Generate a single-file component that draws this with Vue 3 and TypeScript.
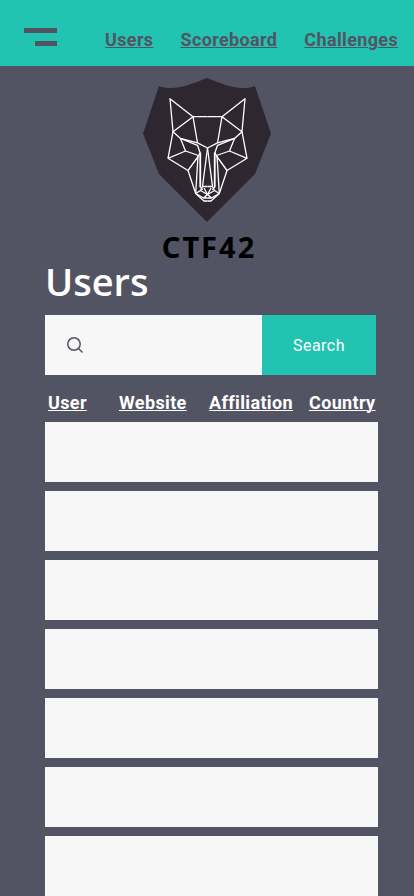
<script setup lang="ts">
interface NavLink {
  label: string
  href: string
}

const navLinks: NavLink[] = [
  { label: 'Users', href: '#users' },
  { label: 'Scoreboard', href: '#scoreboard' },
  { label: 'Challenges', href: '#challenges' },
]

const columns: string[] = ['User', 'Website', 'Affiliation', 'Country']
const rowCount = 7
</script>

<template>
  <div class="page">
    <header class="topbar">
      <button class="menu" type="button" aria-label="Menu">
        <span class="bar bar-long"></span>
        <span class="bar bar-short"></span>
      </button>
      <nav class="nav">
        <a v-for="link in navLinks" :key="link.label" :href="link.href">{{ link.label }}</a>
      </nav>
    </header>

    <div class="brand">
      <svg class="shield" viewBox="143 78 128 144" aria-hidden="true">
        <path
          class="plate"
          d="M207 78C195 83 181 88 171 88Q163 88 159 86L143 133.500L159 174L207 222L255 174L271 133.500L255 86Q251 88 243 88C233 88 219 83 207 78Z"
        />
        <g id="half" class="lines">
          <path class="shade" d="M199 155L200.500 154V188L199 187Z" />
          <path d="M207.500 116.700H193L170 98.700L173 131.700L193 116.700L197.500 143" />
          <path d="M173 131.700L168 158.300L188 170.500L198.500 156" />
          <path d="M173 131.700L180.500 138.500L197.500 142.800L207.500 148" />
          <path d="M180.500 138.500L185.500 151L168 158.300M185.500 151L198.500 155.500" />
          <path d="M180.500 138.500L197.500 145.300L200 152.500L198.500 156" />
          <path d="M188 170.500L195.700 193.500L204 201H207.500" />
          <path d="M198 156L195.700 193.500M200.500 152.500V187L202.500 190" />
          <path d="M207.500 148L202.500 186.500H207.500M202.500 186.500L200.500 190.500L207.500 194.500L204 188" />
          <path d="M195.700 193.500L200.500 190.500M207.500 194.500L203.500 198L195.700 193.500M203.500 198H207.500" />
        </g>
        <use href="#half" transform="matrix(-1 0 0 1 415 0)" />
      </svg>
      <p class="name">CTF42</p>
    </div>

    <main class="content">
      <h1>Users</h1>
      <form class="search" @submit.prevent>
        <label class="field">
          <svg class="glass" viewBox="0 0 18 18" aria-hidden="true">
            <circle cx="8" cy="8" r="6.200" />
            <path d="M12.500 12.500L16.500 16.500" />
          </svg>
          <input type="search" aria-label="Search users" />
        </label>
        <button type="submit">Search</button>
      </form>

      <table>
        <thead>
          <tr>
            <th v-for="column in columns" :key="column" scope="col">
              <a href="#users">{{ column }}</a>
            </th>
          </tr>
        </thead>
        <tbody>
          <tr v-for="row in rowCount" :key="row">
            <td v-for="column in columns" :key="column"></td>
          </tr>
        </tbody>
      </table>
    </main>
  </div>
</template>

<style>
body {
  background: #535463;
}
</style>

<style scoped>
.page {
  font-family: Roboto, 'Liberation Sans', sans-serif;
  background: #535463;
  color: #fff;
}

.topbar {
  display: flex;
  align-items: flex-end;
  justify-content: space-between;
  box-sizing: border-box;
  height: 66px;
  padding: 0 16px 16px 24px;
  background: #22c3b1;
}

.menu {
  display: flex;
  flex-direction: column;
  align-items: flex-end;
  gap: 8px;
  margin-bottom: 4px;
  padding: 0;
  border: 0;
  background: none;
}

.bar {
  height: 5px;
  background: #535463;
}

.bar-long {
  width: 33px;
}

.bar-short {
  width: 22px;
}

.nav {
  display: flex;
  gap: 27px;
}

.nav a,
th a {
  font-size: 18px;
  font-weight: 700;
  letter-spacing: 0.02em;
  text-decoration: underline;
  text-decoration-thickness: 1px;
}

.nav a {
  color: #535463;
  line-height: 20px;
}

.brand {
  display: flex;
  flex-direction: column;
  align-items: center;
  padding-top: 12px;
}

.shield {
  width: 128px;
  height: 144px;
}

.plate {
  fill: #2f2730;
}

.lines {
  fill: none;
  stroke: #fff;
  stroke-width: 1.300;
  stroke-linejoin: round;
}

.shade {
  fill: #a9a6aa;
  stroke: none;
}

.name {
  margin: 8px 0 0;
  padding-left: 4px;
  color: #000;
  font: 700 29px/34px 'Noto Sans', sans-serif;
  letter-spacing: 2px;
}

.content {
  padding: 0 36px 0 45px;
}

h1 {
  margin: 0;
  font: 600 38px/34px 'Open Sans', 'Noto Sans', sans-serif;
}

.search {
  display: flex;
  height: 60px;
  margin: 17px 2px 0 0;
}

.field {
  display: flex;
  flex: 1;
  align-items: center;
  gap: 10px;
  min-width: 0;
  padding: 0 21px;
  background: #f7f7f7;
}

.glass {
  flex: none;
  width: 18px;
  height: 18px;
  fill: none;
  stroke: #535463;
  stroke-width: 1.500;
}

.field input {
  flex: 1;
  min-width: 0;
  border: 0;
  outline: 0;
  background: none;
  font: 16px/20px Roboto, sans-serif;
}

.search button {
  width: 114px;
  padding: 2px 0 0;
  border: 0;
  background: #22c3b1;
  color: #fff;
  font: 400 16px/20px Roboto, sans-serif;
  letter-spacing: 0.03em;
}

table {
  width: 100%;
  margin: 9px 0 -9px;
  border-collapse: separate;
  border-spacing: 0 9px;
  table-layout: fixed;
}

th {
  padding: 0 0 0 3px;
  height: 20px;
  text-align: left;
  vertical-align: bottom;
  line-height: 18px;
}

th:nth-child(1) {
  width: 68px;
}

th:nth-child(2) {
  width: 87px;
}

th:nth-child(3) {
  width: 97px;
}

th a {
  color: #fff;
}

td {
  height: 60px;
  padding: 0;
  background: #f7f7f7;
}
</style>
